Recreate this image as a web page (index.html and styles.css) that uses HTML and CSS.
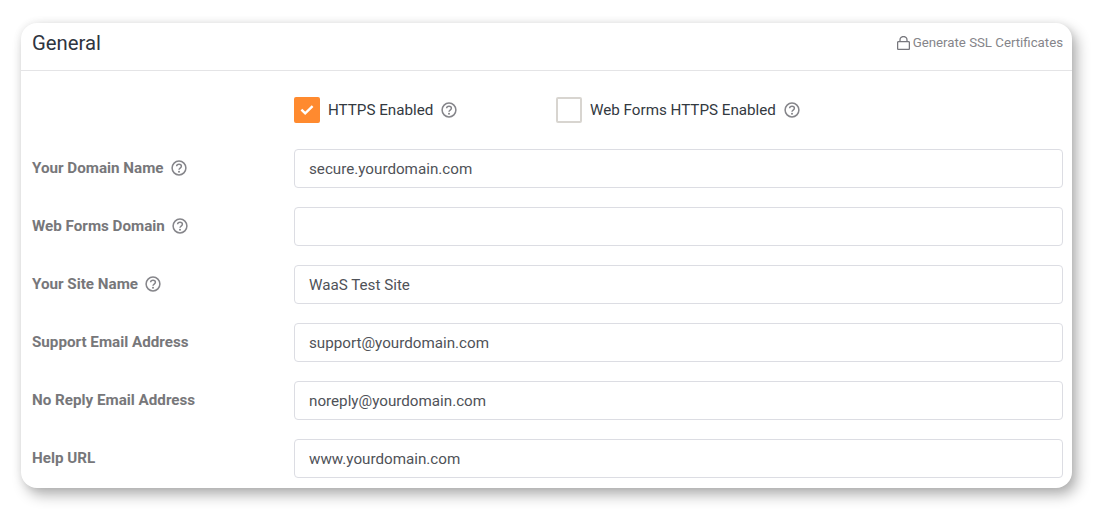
FILE: index.html
```html
<!DOCTYPE html>
<html lang="en">
<head>
<meta charset="utf-8">
<title>General</title>
<link rel="stylesheet" href="styles.css">
</head>
<body>
<svg class="defs" width="0" height="0" aria-hidden="true">
  <symbol id="help" viewBox="0 0 16 16">
    <circle cx="8" cy="8" r="6.9" fill="none" stroke="currentColor" stroke-width="1.5"/>
    <path d="M5.6 6.3C5.7 5 6.8 4.2 8 4.2c1.4 0 2.4.8 2.4 2 0 1.9-2.4 1.8-2.4 3.6" fill="none" stroke="currentColor" stroke-width="1.5"/>
    <circle cx="8" cy="11.8" r="1" fill="currentColor"/>
  </symbol>
</svg>
<main class="card">
  <header class="card-head">
    <h1 class="title">General</h1>
    <a class="ssl-link">
      <svg class="lock" viewBox="0 0 13 14" width="13" height="14" aria-hidden="true">
        <rect x=".6" y="5.6" width="11.8" height="7.8" rx="1" fill="none" stroke="currentColor" stroke-width="1.3"/>
        <path d="M3 5.6V4a3.5 3.5 0 0 1 7 0v1.6" fill="none" stroke="currentColor" stroke-width="1.3"/>
      </svg>
      Generate SSL Certificates
    </a>
  </header>
  <section class="card-body">
    <div class="checks">
      <label class="check check-first">
        <span class="box box-on">
          <svg viewBox="0 0 14 14" width="14" height="14" aria-hidden="true"><path d="M1.4 6.6l3.8 3.8 7.4-7.2" fill="none" stroke="#fff" stroke-width="2.4"/></svg>
        </span>
        <span class="check-text">HTTPS Enabled</span>
        <svg class="help"><use href="#help"/></svg>
      </label>
      <label class="check">
        <span class="box"></span>
        <span class="check-text">Web Forms HTTPS Enabled</span>
        <svg class="help"><use href="#help"/></svg>
      </label>
    </div>
    <div class="row">
      <div class="label">Your Domain Name <svg class="help"><use href="#help"/></svg></div>
      <div class="field">secure.yourdomain.com</div>
    </div>
    <div class="row">
      <div class="label">Web Forms Domain <svg class="help"><use href="#help"/></svg></div>
      <div class="field"></div>
    </div>
    <div class="row">
      <div class="label">Your Site Name <svg class="help"><use href="#help"/></svg></div>
      <div class="field">WaaS Test Site</div>
    </div>
    <div class="row">
      <div class="label">Support Email Address</div>
      <div class="field">support@yourdomain.com</div>
    </div>
    <div class="row">
      <div class="label">No Reply Email Address</div>
      <div class="field">noreply@yourdomain.com</div>
    </div>
    <div class="row">
      <div class="label">Help URL</div>
      <div class="field">www.yourdomain.com</div>
    </div>
  </section>
</main>
</body>
</html>
```
FILE: styles.css
```css
* { box-sizing: border-box; }
html, body { margin: 0; height: 100%; }
body {
  background: #fff;
  padding: 23px 32px 0 21px;
  font-family: Roboto, "Liberation Sans", sans-serif;
  overflow: hidden;
}
.defs { position: absolute; }
.card {
  width: 1051px;
  height: 465px;
  background: #fff;
  border-radius: 16px;
  box-shadow: 5px 7px 14px rgba(0, 0, 0, .3), 0 0 8px rgba(0, 0, 0, .08);
}
.card-head {
  height: 48px;
  display: flex;
  align-items: center;
  justify-content: space-between;
  padding: 0 9px 8px 11px;
  border-bottom: 1px solid #e4e4e6;
}
.title {
  margin: 0;
  font-size: 20.3px;
  font-weight: 400;
  color: #2f3540;
}
.ssl-link {
  display: flex;
  align-items: center;
  gap: 3px;
  font-size: 13.25px;
  color: #85858a;
}
.lock { color: #77777d; }
.card-body { padding: 26px 9px 0 11px; }
.checks {
  display: flex;
  padding-left: 262px;
  height: 26px;
  margin-bottom: 25px;
}
.check {
  display: flex;
  align-items: center;
}
.check-first { width: 262px; }
.box {
  width: 26px;
  height: 26px;
  border: 2px solid #d8d5d0;
  border-radius: 2px;
  display: flex;
  align-items: center;
  justify-content: center;
  margin-right: 8px;
}
.box-on {
  background: #ff8a2f;
  border-color: #ff8a2f;
}
.check-text {
  font-size: 15.2px;
  color: #33393f;
  margin-right: 8px;
}
.help {
  width: 16px;
  height: 16px;
  color: #85858a;
  flex: none;
}
.row {
  display: flex;
  align-items: center;
  height: 40px;
  margin-bottom: 18px;
}
.label {
  width: 262px;
  display: flex;
  align-items: center;
  gap: 7px;
  font-size: 15.2px;
  font-weight: 700;
  color: #77777a;
}
.field {
  width: 769px;
  height: 39px;
  display: flex;
  align-items: center;
  padding: 1px 0 0 14px;
  border: 1px solid #dcdde3;
  border-radius: 4px;
  font-size: 15.2px;
  color: #4f5258;
}
```
